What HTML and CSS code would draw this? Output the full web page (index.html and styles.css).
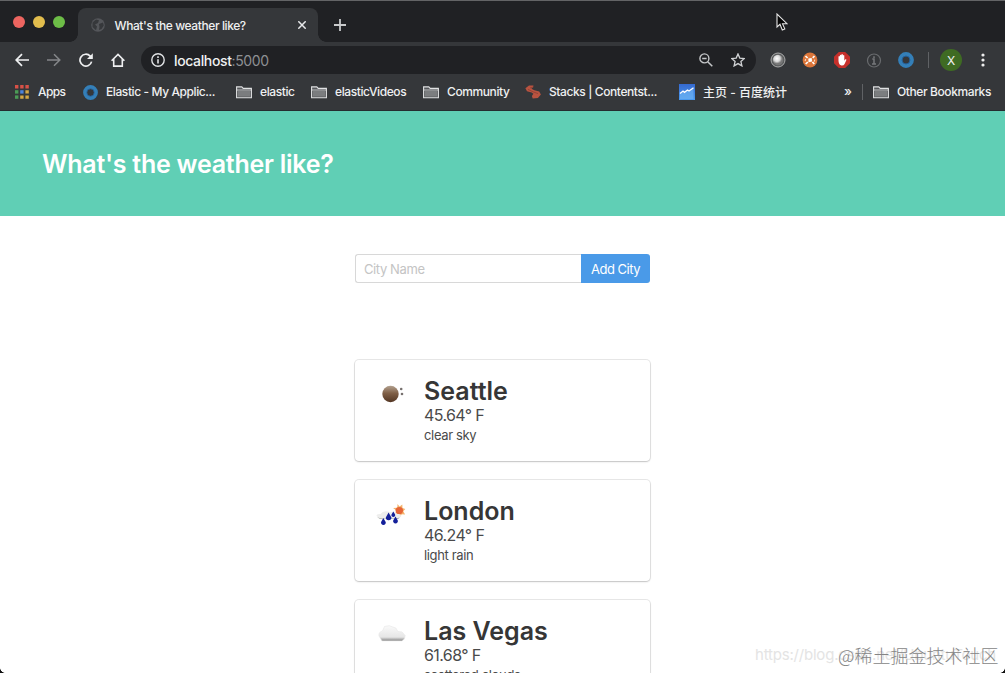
FILE: index.html
```html
<!DOCTYPE html>
<html lang="en">
<head>
<meta charset="utf-8">
<title>What's the weather like?</title>
<link rel="stylesheet" href="styles.css">
</head>
<body>
<svg width="0" height="0" class="defs">
  <defs>
    <symbol id="folder" viewBox="0 0 16 13"><path d="M.6 11.8V.9h5.2l1.4 1.5h8.2v9.4z" fill="#55575a" stroke="#e0e1e2" stroke-width="1.1"/><path d="M2 5h12v5.6H2z" fill="#7b7d7f"/><path d="M.6 4h14.8" stroke="#e0e1e2" stroke-width=".8"/></symbol>
    <symbol id="ring" viewBox="0 0 16 16"><circle cx="8" cy="8" r="5.8" fill="none" stroke="#347fb8" stroke-width="4.2"/><circle cx="8" cy="8" r="4" fill="none" stroke="#255f98" stroke-width=".9"/></symbol>
    <radialGradient id="pearl" cx=".4" cy=".35"><stop offset="0" stop-color="#fff"/><stop offset=".6" stop-color="#d8d8d8"/><stop offset="1" stop-color="#777"/></radialGradient>
    <linearGradient id="moon" x2="0" y2="1"><stop offset="0" stop-color="#b3a18f"/><stop offset=".45" stop-color="#806047"/><stop offset="1" stop-color="#533623"/></linearGradient>
    <linearGradient id="mist" x2="0" y2="1"><stop offset="0" stop-color="#fafafa"/><stop offset=".75" stop-color="#e6e6e6"/><stop offset="1" stop-color="#858585"/></linearGradient>
    <linearGradient id="chart" x2="0" y2="1"><stop offset="0" stop-color="#3569cf"/><stop offset="1" stop-color="#4a9aef"/></linearGradient>
  </defs>
</svg>
<div class="window">
  <header class="chrome">
    <div class="tabstrip">
      <div class="lights"><i class="red"></i><i class="yellow"></i><i class="green"></i></div>
      <div class="tab">
        <svg class="globe" width="14" height="14" viewBox="0 0 14 14"><circle cx="7" cy="7" r="6.8" fill="#54565a"/><path d="M1.5 4.5 5 1.5l3 .7-1 2.8-3 1.5L6 8.5l-1 3.7L1.5 9zM8 6l4-1.5.8 3L10.5 11 8 12l.5-3z" fill="#36383b"/></svg>
        <span class="tab-title">What's the weather like?</span>
        <svg class="close" width="8" height="8" viewBox="0 0 8 8"><path d="M.3.3l7.4 7.4M7.7.3.3 7.7" stroke="#e8e9eb" stroke-width="1.5"/></svg>
      </div>
      <svg class="plus" width="12" height="12" viewBox="0 0 12 12"><path d="M6 0v12M0 6h12" stroke="#c8cacc" stroke-width="1.8"/></svg>
    </div>
    <div class="toolbar">
      <div class="nav">
        <svg width="14" height="14" viewBox="0 0 14 14"><path d="M14 7H1.2M7 1.2 1.2 7 7 12.8" fill="none" stroke="#eff0f1" stroke-width="1.7"/></svg>
        <svg width="14" height="14" viewBox="0 0 14 14"><path d="M0 7h12.8M7 1.2 12.8 7 7 12.8" fill="none" stroke="#85878a" stroke-width="1.5"/></svg>
        <svg width="14" height="14" viewBox="0 0 14 14"><path d="M12.6 8.6A5.9 5.9 0 1 1 11.2 3.1L12.7 4.7" fill="none" stroke="#eff0f1" stroke-width="1.7"/><path d="M13.8.2v5.9H8z" fill="#eff0f1"/></svg>
        <svg width="14" height="14" viewBox="0 0 14 14"><path d="M.6 7.7 7 1.4l6.4 6.3M2.7 6v7.1h8.6V6" fill="none" stroke="#eff0f1" stroke-width="1.6"/></svg>
      </div>
      <div class="omnibox">
        <svg width="14" height="14" viewBox="0 0 14 14"><circle cx="7" cy="7" r="6.2" fill="none" stroke="#e1e3e5" stroke-width="1.4"/><path d="M7 6.2v4.2M7 3.3v1.6" stroke="#e1e3e5" stroke-width="1.6"/></svg>
        <span class="url">localhost<span>:5000</span></span>
        <svg class="zoom" width="14" height="14" viewBox="0 0 14 14"><circle cx="5.4" cy="5.4" r="4.5" fill="none" stroke="#c4c6c8" stroke-width="1.4"/><path d="m8.7 8.7 4.6 4.6M3.2 5.4h4.4" stroke="#c4c6c8" stroke-width="1.5"/></svg>
        <svg width="14" height="14" viewBox="0 0 14 14"><path d="m7 .9 1.8 4.2 4.5.4-3.4 3 1 4.4L7 10.6l-3.9 2.3 1-4.4-3.4-3 4.5-.4z" fill="none" stroke="#d0d2d4" stroke-width="1.3"/></svg>
      </div>
      <div class="extensions">
        <svg width="16" height="16" viewBox="0 0 16 16"><circle cx="8" cy="8" r="7" fill="#5b5d5e" stroke="#aaa" stroke-width="1"/><circle cx="8" cy="8" r="5.2" fill="url(#pearl)"/></svg>
        <svg width="16" height="16" viewBox="0 0 16 16"><circle cx="8" cy="8" r="7.4" fill="#dc763a"/><path d="M3.5 4 5.6 6M12.5 4 10.7 5.8M3.7 12 5.8 10M12.3 12 10.4 10" stroke="#fff" stroke-width="1.7"/><path d="m6.3 6.6 3.4-.6.4 3.4-3.6.8z" fill="#fff"/><path d="m3.7 7-.6 2M12.8 7.6l-.6 2" stroke="#fbd8bd" stroke-width="1.1"/></svg>
        <svg width="16" height="16" viewBox="0 0 16 16"><path d="M4.8 0h6.4L16 4.8v6.4L11.2 16H4.8L0 11.2V4.8z" fill="#c6302b"/><path d="M4.5 9V4.5q.7-1 1.4 0V3.2q.7-1 1.5 0v-.6q.7-1 1.5 0v1q.7-1 1.4 0V8.8l1-1.5q1-.3 1.2.5L10.6 12q-.9 1.7-3.1 1.5Q4.8 13 4.5 9z" fill="#fff"/></svg>
        <svg width="16" height="16" viewBox="0 0 16 16"><circle cx="8" cy="8.5" r="6.5" fill="none" stroke="#696b6e" stroke-width="1.2"/><path d="M6.3 7H8v4.5M6 12h4M8 4.3v1.6" fill="none" stroke="#76787b" stroke-width="1.5"/></svg>
        <svg width="16" height="16"><use href="#ring"/></svg>
      </div>
      <i class="divider"></i>
      <div class="avatar">X</div>
      <svg class="menu" width="4" height="14" viewBox="0 0 4 14"><circle cx="2" cy="2" r="1.6" fill="#eee"/><circle cx="2" cy="7" r="1.6" fill="#eee"/><circle cx="2" cy="12" r="1.6" fill="#eee"/></svg>
    </div>
    <nav class="bookmarks">
      <a class="b-apps"><svg width="14" height="14" viewBox="0 0 14 14"><path d="M0 0h3.4v3.4H0zM5.2 0h3.4v3.4H5.2zM10.4 0h3.4v3.4h-3.4z" fill="#d85147"/><path d="M0 5.2h3.4v3.4H0z" fill="#4b9b56"/><path d="M5.2 5.2h3.4v3.4H5.2z" fill="#4c83dd"/><path d="M10.4 5.2h3.4v3.4h-3.4zM10.4 10.4h3.4v3.4h-3.4zM5.2 10.4h3.4v3.4H5.2z" fill="#d6a845"/><path d="M0 10.4h3.4v3.4H0z" fill="#4b9b56"/></svg><span>Apps</span></a>
      <a class="b-app"><svg width="15" height="15" viewBox="0 0 16 16"><use href="#ring" width="16" height="16"/></svg><span>Elastic - My Applic...</span></a>
      <a class="b-elastic"><svg width="16" height="13"><use href="#folder"/></svg><span>elastic</span></a>
      <a class="b-videos"><svg width="16" height="13"><use href="#folder"/></svg><span>elasticVideos</span></a>
      <a class="b-community"><svg width="16" height="13"><use href="#folder"/></svg><span>Community</span></a>
      <a class="b-stacks"><svg width="16" height="14" viewBox="0 0 16 14"><path d="M8.5.6 4 .4.4 3.3 2 6.2l4.6 1.4 1.8 1.2-1.5 2.2.8 2.5 5.2-.4 3-3.6-1.7-2.9-4.8-1.4-3-1.5L8 2.3z" fill="#b95340"/><path d="m3 4.4 5 2.4 5 1.8M5 3l3.4-1" fill="none" stroke="#8b3f33" stroke-width=".8"/></svg><span>Stacks | Contentst...</span></a>
      <a class="b-baidu"><svg width="16" height="16" viewBox="0 0 16 16"><path d="M0 0h16v16H0z" fill="url(#chart)"/><path d="m1 10 3-2.5 1.5 1.3 3-2.3L10 7.5 14.5 4v11H1z" fill="#70b3f3" opacity=".65"/><path d="m1 9.5 3-2.5 1.5 1.3 3-2.3L10 7l4.5-3.2" fill="none" stroke="#fff" stroke-width="1.3"/></svg><span>主页 - 百度统计</span></a>
      <span class="more">»</span>
      <i class="divider"></i>
      <a class="b-other"><svg width="16" height="13"><use href="#folder"/></svg><span>Other Bookmarks</span></a>
    </nav>
  </header>
  <section class="hero"><h1>What's the weather like?</h1></section>
  <main>
    <form class="search"><input type="text" placeholder="City Name"><button type="button">Add City</button></form>
    <div class="cities">
      <article class="card">
        <svg class="weather" width="40" height="40" viewBox="0 0 40 40"><circle cx="15.5" cy="19" r="8.2" fill="url(#moon)"/><circle cx="26.2" cy="14" r="1.3" fill="#77716f"/><circle cx="27" cy="19" r="1.3" fill="#77716f"/></svg>
        <div><h2>Seattle</h2><p class="temp">45.64° F</p><p class="desc">clear sky</p></div>
      </article>
      <article class="card">
        <svg class="weather" width="40" height="40" viewBox="0 0 40 40"><path d="m22.5 9 2 2.6 2.8-2 .2 3.4 2.8.9-2 2.3 1.8 3.3-3.4-.3-1.3 2.6-2-2.9-3-.8 1.1-2.4-3.4-2.8 4.2-.2z" fill="#f4b36c"/><circle cx="24.3" cy="15.6" r="3.7" fill="#e66436"/><path d="M1.5 21q0-2.5 4-2 3-4 9-2 5-1 7 2 6-.5 4 3l-2 1H4z" fill="#eeeeed"/><path d="M2 22q5 2.5 11 1 7 1 12-.6l-2 1.6H5z" fill="#a2a5a0"/><path d="m8.3 23 2.4 4a2.4 2.4 0 1 1-4.6 0zM13.6 17.5l2.8 5a2.8 2.8 0 1 1-5.6 0zM18.3 16.5l1.8 3a1.9 1.9 0 1 1-3.6 0zM20.5 21.5l2.3 4a2.4 2.4 0 1 1-4.6 0z" fill="#14209a"/></svg>
        <div><h2>London</h2><p class="temp">46.24° F</p><p class="desc">light rain</p></div>
      </article>
      <article class="card">
        <svg class="weather" width="40" height="40" viewBox="0 0 40 40"><path d="M4 21q-.8-4 3.5-5l2-4.5 4.6-.8 6.8 2.4 2 3.4 4.1.4 3.2 3.7-.8 3.3-2.5 2H7z" fill="url(#mist)" stroke="#e6e6e6" stroke-width=".6"/></svg>
        <div><h2>Las Vegas</h2><p class="temp">61.68° F</p><p class="desc">scattered clouds</p></div>
      </article>
    </div>
  </main>
  <svg class="cursor" width="12" height="18" viewBox="0 0 12 18"><path d="M1 1v13l3-2.7L6.3 17l2.5-1.1-2.3-5.2H11z" fill="#050505" stroke="#e5e5e5" stroke-width="1.1"/></svg>
  <span class="mark-url">https://blog.csdn.net/UbuntuTouch</span>
  <span class="mark-site">@稀土掘金技术社区</span>
  <i class="corner left"></i><i class="corner right"></i>
</div>
</body>
</html>
```
FILE: styles.css
```css
* { box-sizing: border-box; }
body { margin: 0; font-family: Inter, "Noto Sans CJK SC", sans-serif; background: #fff; }
h1, h2, p { margin: 0; }
svg { flex: none; display: block; }
.defs { position: absolute; }
.window { position: relative; width: 1005px; height: 673px; overflow: hidden; }
.chrome { height: 111px; background: #35373a; border-bottom: 1px solid #252d30; color: #eff0f1; }
.tabstrip { height: 42px; background: #202124; border-top: 1px solid #636466; display: flex; align-items: center; }
.lights { display: flex; gap: 8px; padding-left: 13px; width: 78px; }
.lights i { width: 12px; height: 12px; border-radius: 50%; }
.red { background: #ed6560; }
.yellow { background: #e2bd4d; }
.green { background: #6dbd47; }
.tab { position: relative; align-self: flex-end; height: 34px; width: 240px; background: #35373a; border-radius: 8px 8px 0 0; display: flex; align-items: center; padding: 0 12px 0 13px; }
.tab::before, .tab::after { content: ""; position: absolute; bottom: 0; width: 8px; height: 8px; }
.tab::before { left: -8px; background: radial-gradient(circle at 0 0, #202124 7.5px, #35373a 8px); }
.tab::after { right: -8px; background: radial-gradient(circle at 100% 0, #202124 7.5px, #35373a 8px); }
.tab-title { margin-left: 9.5px; font-size: 12px; letter-spacing: -.4px; white-space: nowrap; font-weight: 500; }
.close { margin-left: auto; }
.plus { margin: 7px 0 0 16px; }
.toolbar { height: 36px; display: flex; align-items: center; }
.nav { display: flex; gap: 18px; padding-left: 15px; width: 141px; }
.omnibox { height: 28px; width: 615px; border-radius: 14px; background: #202124; display: flex; align-items: center; padding: 0 11px 0 10px; }
.url { margin-left: 9px; font-size: 14px; letter-spacing: -.37px; font-weight: 500; }
.url span { color: #8e9093; font-weight: 400; }
.zoom { margin: 0 18px 0 auto; }
.extensions { display: flex; gap: 16px; margin-left: 14px; }
.divider { width: 1px; height: 16px; background: #606265; flex: none; }
.toolbar .divider { margin-left: 14px; }
.avatar { width: 22px; height: 22px; border-radius: 50%; background: #3f6b23; font-size: 12px; display: flex; align-items: center; justify-content: center; margin-left: 11px; }
.menu { margin-left: 19px; }
.bookmarks { height: 28px; display: flex; align-items: center; padding-left: 15px; font-size: 12px; font-weight: 500; letter-spacing: -.4px; white-space: nowrap; }
.bookmarks a { display: flex; align-items: center; flex: none; }
.bookmarks a span { margin-left: 8px; padding-bottom: 1px; }
.bookmarks .b-apps { width: 68px; }
.bookmarks .b-apps span { margin-left: 9px; letter-spacing: -.6px; }
.bookmarks .b-app { width: 153px; }
.bookmarks .b-elastic { width: 75px; }
.bookmarks .b-videos { width: 112px; }
.bookmarks .b-community { width: 102px; }
.bookmarks .b-stacks { width: 154px; }
.bookmarks .b-baidu { width: 165px; letter-spacing: 0; }
.bookmarks .b-baidu span { padding-bottom: 2px; }
.more { width: 18px; font-size: 13px; padding-bottom: 2px; }
.b-other { margin-left: 10px; }
.hero { height: 105px; background: #60cfb5; display: flex; align-items: center; padding: 1px 42px 0; }
.hero h1 { color: #fff; font-size: 25px; line-height: 30px; font-weight: 600; letter-spacing: -.25px; }
main { width: 295px; margin: 0 auto; padding-top: 38px; }
.search { display: flex; height: 29px; }
.search input { width: 226px; padding: 0 8px; border: 1px solid #d8d8d8; border-right: 0; border-radius: 3px 0 0 3px; font: 13px Inter, sans-serif; letter-spacing: -.4px; }
.search input::placeholder { color: #c4c4c4; }
.search button { flex: 1; padding: 0; border: 0; border-radius: 0 3px 3px 0; background: #4a9ae8; color: #fff; font: 13px Inter, sans-serif; letter-spacing: -.5px; white-space: nowrap; }
.cities { display: flex; flex-direction: column; gap: 19px; margin-top: 77px; }
.card { height: 101px; border-radius: 4px; box-shadow: 0 1px 2px rgba(0,0,0,.16), 0 0 0 1px rgba(0,0,0,.09); display: flex; padding: 15px 16px 0 20px; color: #4a4a4a; }
.weather { margin-right: 9px; }
.card h2 { font-size: 25px; line-height: 32px; font-weight: 600; color: #363636; }
.temp { font-size: 16px; line-height: 17px; letter-spacing: -.6px; }
.desc { font-size: 13px; line-height: 23px; letter-spacing: -.35px; }
.cursor { position: absolute; left: 776px; top: 13px; }
.mark-url { position: absolute; left: 755px; top: 645px; font-size: 15px; line-height: 20px; letter-spacing: -.2px; color: #e4e4e4; white-space: nowrap; }
.mark-site { position: absolute; left: 838px; top: 642px; font: 300 18px/26px "Noto Sans CJK SC", sans-serif; color: #858585; white-space: nowrap; }
.corner { position: absolute; bottom: 0; width: 5px; height: 5px; }
.left { left: 0; background: radial-gradient(circle at 100% 0, transparent 4.5px, #111 5px); }
.right { right: 0; background: radial-gradient(circle at 0 0, transparent 4.5px, #111 5px); }
```
